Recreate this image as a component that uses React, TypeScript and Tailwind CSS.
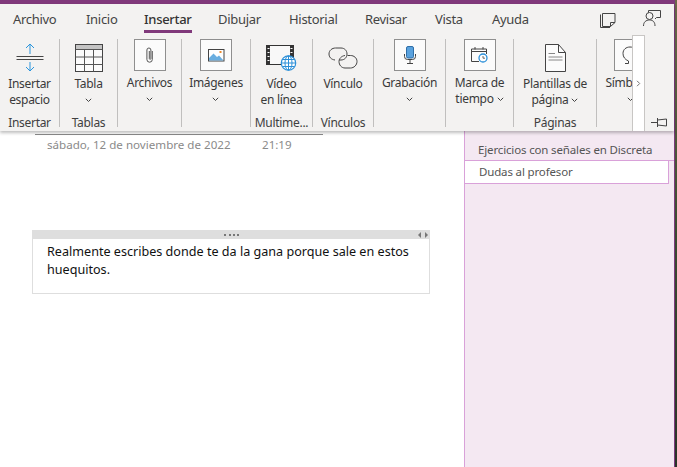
import React from "react";

const Chevron = ({ className = "" }: { className?: string }) => (
  <svg width="7" height="5" viewBox="0 0 7 5" className={className} fill="none" stroke="#444" strokeWidth="1">
    <path d="M0.8 0.8 L3.5 3.5 L6.2 0.8" />
  </svg>
);

const Box = ({ children }: { children: React.ReactNode }) => (
  <div className="w-[32px] h-[32px] border border-[#8f8f8f] bg-[#fbfbfb] flex items-center justify-center shrink-0">{children}</div>
);

const SpaceIcon = () => (
  <svg width="28" height="29" viewBox="0 0 28 29" fill="none">
    <path d="M0.5 13.500H27.500M0.500 16.500H27.500" stroke="#444" strokeWidth="1" />
    <path d="M14 1V11M10 5L14 1L18 5" stroke="#2b95dc" strokeWidth="1" />
    <path d="M14 19V28M10 24L14 28L18 24" stroke="#2b95dc" strokeWidth="1" />
  </svg>
);
const TableIcon = () => (
  <svg width="28" height="28" viewBox="0 0 28 28" fill="none">
    <rect x="0.5" y="0.5" width="27" height="27" fill="#fbfbfb" stroke="#444" />
    <rect x="1" y="1" width="26" height="4" fill="#c4c4c4" />
    <path d="M0.5 5.500H27.500M0.500 13H27.500M0.500 20.500H27.500M9.500 5.500V27.500M18.500 5.500V27.500" stroke="#555" />
  </svg>
);
const ClipIcon = () => (
  <svg width="12" height="18" viewBox="0 0 12 18" fill="none" stroke="#555" strokeWidth="1">
    <path d="M8.500 4.500V13a2.700 2.700 0 0 1-5.400 0V3.500a2 2 0 0 1 4 0V12a.8.8 0 0 1-1.600 0V4.500" transform="translate(-0.2 0.5)" />
  </svg>
);
const ImageIcon = () => (
  <svg width="17" height="13" viewBox="0 0 17 13" fill="none">
    <rect x="0.5" y="0.5" width="15.500" height="11.500" fill="#fff" stroke="#444" />
    <rect x="11.500" y="2" width="2" height="2" fill="#ed8b2e" />
    <path d="M1 11.500V9L5.500 4.500L9 8L11 6.500L15.500 11.500Z" fill="#6aaee0" />
  </svg>
);
const VideoIcon = () => (
  <svg width="31" height="26" viewBox="0 0 31 26" fill="none">
    <rect x="0.500" y="0.500" width="27" height="19" fill="#f8f8f8" stroke="#333" />
    <path d="M1 1H4V19H1ZM24 1H27V19H24Z" fill="#333" />
    <path d="M1.500 3.500H3.500M1.500 7.500H3.500M1.500 11.500H3.500M1.500 15.500H3.500M24.500 3.500H26.500M24.500 7.500H26.500" stroke="#fff" />
    <circle cx="22.500" cy="18" r="7.200" fill="#fff" stroke="#2b8fd8" strokeWidth="1.200" />
    <path d="M15.500 18H29.500M16.500 14.500H28.500M16.500 21.500H28.500M22.500 11V25" stroke="#2b8fd8" />
    <ellipse cx="22.500" cy="18" rx="3.500" ry="7.200" stroke="#2b8fd8" />
  </svg>
);
const LinkIcon = () => (
  <svg width="30" height="22" viewBox="0 0 30 22" fill="none" stroke="#444" strokeWidth="1">
    <path d="M7 13C3 12.500 1 10 1 7C1 3.500 4 1 7.500 1H13C16.500 1 19 3.500 19 7C19 10.500 16.500 13 13 13H11" />
    <path d="M19.500 8.500H22.500C26 8.500 29 11 29 14.500C29 18 26 21 22.500 21H17C13.500 21 11 18 11 14.500C11 11.500 13.500 9 17 8.500" />
  </svg>
);
const MicIcon = () => (
  <svg width="12" height="19" viewBox="0 0 12 19" fill="none">
    <rect x="2.500" y="0.500" width="7" height="11.500" rx="1.500" fill="#5aa2de" stroke="#2f6fa8" />
    <path d="M0.500 8v2.500a3 3 0 0 0 3 3h5a3 3 0 0 0 3-3V8M6 13.500V17M3 17.500H9" stroke="#444" />
  </svg>
);
const ClockIcon = () => (
  <svg width="17" height="16" viewBox="0 0 17 16" fill="none" overflow="visible">
    <path d="M8 14.500H0.500V2H15.500V7" stroke="#444" />
    <path d="M0.500 4.500H15.500M4 0V2.500M12 0V2.500" stroke="#444" />
    <circle cx="12" cy="11" r="4" fill="#fff" stroke="#2b8fd8" strokeWidth="1.300" />
    <path d="M12 9V11.200H14" stroke="#444" strokeWidth="0.800" />
  </svg>
);
const PageIcon = () => (
  <svg width="21" height="28" viewBox="0 0 21 28" fill="none" stroke="#444">
    <path d="M0.500 0.500H13.500L20.500 8.500V27.500H0.500Z" fill="#fbfbfb" />
    <path d="M13.500 0.500V8.500H20.500" />
    <path d="M3.500 9.500H10M3.500 13H17.500M3.500 16H17.500" stroke="#888" />
  </svg>
);
const OmegaIcon = () => (
  <svg width="16" height="19" viewBox="0 0 16 19" fill="none" stroke="#444">
    <path d="M3 17.500H6.500V15C3 13.500 1 11 1 7.500C1 3.500 4 1 8 1C12 1 15 3.500 15 7.500" />
  </svg>
);
const NotesIcon = () => (
  <svg width="16" height="15" viewBox="0 0 16 15" fill="none" stroke="#444">
    <path d="M2.500 0.500H15V9.500L10.500 13.500H2.500Z" fill="#f3f2f1" />
    <path d="M0.500 1.500V14.500H10M10.500 13.500V9.500H15" />
  </svg>
);
const PersonIcon = () => (
  <svg width="18" height="17" viewBox="0 0 18 17" fill="none" stroke="#444">
    <path d="M5.500 3V0.500H17.500V7.500H13.500L12 9" />
    <circle cx="6.500" cy="6" r="3.500" fill="#f3f2f1" />
    <path d="M0.500 16C0.500 12 3 10 6.500 10C10 10 12 12 12 16" />
  </svg>
);
const PinIcon = () => (
  <svg width="17" height="9" viewBox="0 0 17 9" fill="none" stroke="#444">
    <path d="M0 4.500H6M6.500 0V9M6.500 2L15.500 1V8L6.500 7" />
  </svg>
);

const Sep = () => <div className="w-px h-[88px] bg-[#c0bfbe] shrink-0 mt-[4px]" />;

const Group = ({ width, label, children, align = "items-center" }: { width: string; label?: string; children: React.ReactNode; align?: string }) => (
  <div className={`${width} shrink-0 h-full flex flex-col overflow-hidden`}>
    <div className={`h-[80px] pt-[4px] flex flex-col shrink-0 ${align}`}>{children}</div>
    {label && <div className="text-center text-[12px] tracking-[-0.3px] leading-[16px] text-[#404040] whitespace-nowrap">{label}</div>}
  </div>
);

const Lines = ({ a, b, chevron }: { a: string; b?: string; chevron?: boolean }) => (
  <div className="text-center leading-[16px] text-[12px] tracking-[-0.3px] text-[#3a3a3a] whitespace-nowrap">
    <div>{a}</div>
    {b && <div>{b}{chevron && <Chevron className="inline ml-[3px] align-middle" />}</div>}
    {!b && chevron && <div className="flex justify-center h-[16px] items-center"><Chevron /></div>}
  </div>
);

const IconArea = ({ children }: { children: React.ReactNode }) => (
  <div className="h-[33px] mt-[2px] mb-[2px] flex items-center justify-center">{children}</div>
);

const tabs: [string, string][] = [
  ["Archivo", "w-[73px]"],
  ["Inicio", "w-[58px]"],
  ["Insertar", "w-[74px]"],
  ["Dibujar", "w-[71px]"],
  ["Historial", "w-[76px]"],
  ["Revisar", "w-[70px]"],
  ["Vista", "w-[57px]"],
  ["Ayuda", "w-[50px]"],
];

export default function App() {
  return (
    <div className="w-[677px] h-[467px] flex overflow-hidden bg-[#333a2e]" style={{ fontFamily: '"Noto Sans", "Open Sans", sans-serif' }}>
      <div className="w-[674px] h-full flex flex-col border-r border-[#7d3a7d] box-content shrink-0">
        <div className="h-[4px] bg-[#80397b] shrink-0" />
        <div className="relative z-10 h-[127px] bg-[#f3f2f1] shrink-0 shadow-[0_2px_3px_rgba(0,0,0,0.25)]">
          <div className="h-[31px] flex items-start pt-[5px] pl-[13px] text-[13px] tracking-[-0.3px] leading-[20px] text-[#444]">
            {tabs.map(([t, w]) => (
              <div key={t} className={`${w} shrink-0`}>
                {t === "Insertar" ? (
                  <span className="relative inline-block text-[#333] font-medium">
                    {t}
                    <span className="absolute left-0 right-0 top-[21px] h-[3px] bg-[#80397b]" />
                  </span>
                ) : t}
              </div>
            ))}
          </div>
          <div className="absolute right-[13px] top-[6px] flex gap-[27px] items-start">
            <div className="mt-[3px]"><NotesIcon /></div>
            <PersonIcon />
          </div>
          <div className="flex h-[96px] overflow-hidden">
            <Group width="w-[59px]" label="Insertar">
              <IconArea><SpaceIcon /></IconArea>
              <Lines a="Insertar" b="espacio" />
            </Group>
            <Sep />
            <Group width="w-[57px]" label="Tablas">
              <IconArea><TableIcon /></IconArea>
              <Lines a="Tabla" chevron />
            </Group>
            <Sep />
            <Group width="w-[63px]">
              <Box><ClipIcon /></Box>
              <div className="h-[4px]" />
              <Lines a="Archivos" chevron />
            </Group>
            <Sep />
            <Group width="w-[68px]">
              <Box><ImageIcon /></Box>
              <div className="h-[4px]" />
              <Lines a="Imágenes" chevron />
            </Group>
            <Sep />
            <Group width="w-[61px]" label="Multime...">
              <div className="h-[33px] mt-[6px] -mb-[2px] flex items-start justify-center"><VideoIcon /></div>
              <Lines a="Vídeo" b="en línea" />
            </Group>
            <Sep />
            <Group width="w-[60px]" label="Vínculos">
              <IconArea><LinkIcon /></IconArea>
              <Lines a="Vínculo" />
            </Group>
            <Sep />
            <Group width="w-[71px]">
              <Box><MicIcon /></Box>
              <div className="h-[4px]" />
              <Lines a="Grabación" chevron />
            </Group>
            <Sep />
            <Group width="w-[67px]">
              <Box><ClockIcon /></Box>
              <div className="h-[4px]" />
              <Lines a="Marca de" b="tiempo" chevron />
            </Group>
            <Sep />
            <Group width="w-[82px]" label="Páginas">
              <IconArea><PageIcon /></IconArea>
              <Lines a="Plantillas de" b="página" chevron />
            </Group>
            <Sep />
            <Group width="w-[35px]" align="w-[66px] items-center">
              <Box><OmegaIcon /></Box>
              <div className="h-[4px]" />
              <Lines a="Símbolos" chevron />
            </Group>
          </div>
          <div className="absolute left-[632px] top-[31px] w-[13px] h-[96px] bg-white border-x border-t border-[#c8c6c4] flex items-center justify-center">
            <svg width="5" height="7" viewBox="0 0 5 7" fill="none" stroke="#777" strokeWidth="1"><path d="M1 0.800L3.700 3.500L1 6.200" /></svg>
          </div>
          <div className="absolute left-[651px] top-[114px]"><PinIcon /></div>
        </div>
        <div className="flex-1 flex min-h-0 bg-white">
          <div className="w-[464px] shrink-0 flex flex-col">
            <div className="ml-[35px] w-[288px] h-px bg-[#8a8a8a] mt-[3px]" />
            <div className="mt-[1px] pl-[47px] flex text-[11.600px] leading-[18px] text-[#8a8a8a] whitespace-nowrap">
              <span className="w-[215px]">sábado, 12 de noviembre de 2022</span>
              <span>21:19</span>
            </div>
            <div className="ml-[32px] mt-[76px] w-[398px] border border-[#dedede] border-t-0">
              <div className="h-[9px] bg-[#dedede] -mx-px flex items-center relative">
                <span className="mx-auto w-[15px] h-[2px] border-t-2 border-dotted border-[#777]" />
                <span className="absolute right-[2px] top-[2px] flex gap-[4px]">
                  <span className="w-0 h-0 border-y-[3px] border-y-transparent border-r-[3px] border-r-[#777]" />
                  <span className="w-0 h-0 border-y-[3px] border-y-transparent border-l-[3px] border-l-[#777]" />
                </span>
              </div>
              <div className="pl-[14px] pr-[8px] pt-[4px] pb-[14px] text-[12.600px] leading-[18px] text-[#111]">
                Realmente escribes donde te da la gana porque sale en estos huequitos.
              </div>
            </div>
          </div>
          <div className="flex-1 bg-[#f4e8f2] border-l border-[#d9a1d9] flex flex-col text-[11.500px] tracking-[-0.15px] text-[#555]">
            <div className="h-[30px] pt-[9px] pl-[13px] leading-[20px] shrink-0 border-b border-[#d9a1d9]">Ejercicios con señales en Discreta</div>
            <div className="h-[23px] -ml-px mr-[5px] pl-[14px] pt-[1px] leading-[20px] bg-white border border-t-0 border-[#d9a1d9] shrink-0">Dudas al profesor</div>
          </div>
        </div>
      </div>
      <div className="flex-1 bg-gradient-to-b from-[#6b6a4a] via-[#3b4a30] to-[#2a3328]" />
    </div>
  );
}
